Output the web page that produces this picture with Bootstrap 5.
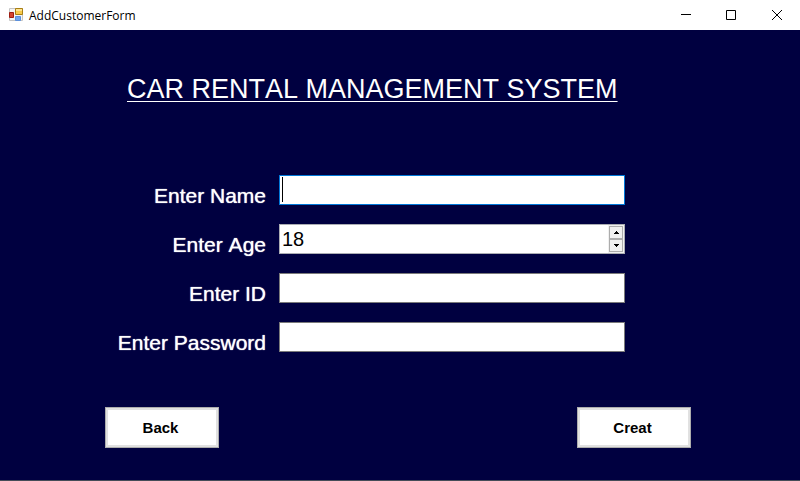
<!DOCTYPE html>
<html lang="en">
<head>
<meta charset="utf-8">
<meta name="viewport" content="width=device-width, initial-scale=1">
<title>AddCustomerForm</title>
<link href="https://cdn.jsdelivr.net/npm/bootstrap@5.3.0/dist/css/bootstrap.min.css" rel="stylesheet">
<style>
body { background: #000040; font-family: "Liberation Sans", Arial, sans-serif; font-kerning: none; color: #fff; }
.window { border-bottom: 1px solid #454c58; }
.titlebar { height: 30px; background: #fff; color: #000; font: 12px "Open Sans", "Noto Sans", sans-serif; }
.caption-btn { width: 45px; height: 30px; background: none; }
.caption-btn:last-child { width: 46px; }
.client { padding: 42px 109px 32px 105px; }
.heading { font-size: 27px; line-height: 34px; padding-left: 22px; text-decoration: underline 1px; text-underline-offset: 3px; }
.fields { display: grid; grid-template-columns: 161px 1fr; column-gap: 13px; row-gap: 19px; padding-right: 66px; margin-top: 69px; }
.fields label { font-size: 21px; line-height: 24px; height: 30px; padding-top: 9px; text-align: right; white-space: nowrap; text-shadow: 0 0 1px #fff; }
.field { height: 30px; background: #fff; border: 1px solid #7a7a7a; }
.field.current { border-color: #0078d7; }
.field.spin { border-color: #abadb3; }
.field input { width: 100%; height: 28px; padding: 0 2px; border: 0; outline: 0; background: transparent; color: #000; font-size: 20px; line-height: 28px; appearance: textfield; -moz-appearance: textfield; }
.field input::-webkit-inner-spin-button { appearance: none; -webkit-appearance: none; margin: 0; }
.caret { position: absolute; left: 2px; top: 1px; width: 1px; height: 25px; background: #000; }
.steps { width: 16px; padding: 1px; background: #f0f0f0; flex: none; }
.steps button { height: 13px; background: #f0f0f0; border: 1px solid #acacac; }
.actions { margin-top: 55px; }
.action { width: 114px; height: 41px; background: #fff; border: 1px solid #adadad; box-shadow: inset 0 0 0 2px #e1e1e1; color: #000; font-size: 15px; font-weight: 700; padding: 1px 3px 0 0; }
</style>
<script src="https://cdn.jsdelivr.net/npm/bootstrap@5.3.0/dist/js/bootstrap.bundle.min.js"></script>
</head>
<body>
<div class="window">
  <header class="titlebar d-flex align-items-center">
    <svg class="ms-2 me-1" width="17" height="16" viewBox="0 0 17 16" aria-hidden="true">
      <path d="M1.500 1.500h13v12h-13z" fill="#f4f4f4" stroke="#c4c4c4"/>
      <path d="M7.500 1.500h7v6h-7z" fill="#f7c948" stroke="#a87f14"/>
      <path d="M8 2h6v2H8z" fill="#ffe391"/>
      <path d="M1.500 5.500h4v5h-4z" fill="#d3442f" stroke="#9d1c12"/>
      <path d="M7.500 9.500h5v4h-5z" fill="#6fa5ee" stroke="#5b90dc"/>
    </svg>
    <span class="me-auto">AddCustomerForm</span>
    <button type="button" class="caption-btn border-0 p-0 d-flex align-items-center justify-content-center" aria-label="Minimize"><svg width="11" height="11"><path d="M0 4.500h10" stroke="#000"/></svg></button>
    <button type="button" class="caption-btn border-0 p-0 d-flex align-items-center justify-content-center" aria-label="Maximize"><svg width="11" height="11"><path d="M.5.500h9v9h-9z" fill="none" stroke="#000"/></svg></button>
    <button type="button" class="caption-btn border-0 p-0 d-flex align-items-center justify-content-center" aria-label="Close"><svg width="11" height="11"><path d="M0 0l10 10M10 0L0 10" stroke="#000"/></svg></button>
  </header>
  <main class="client">
    <h1 class="heading fw-normal text-nowrap mb-0">CAR RENTAL MANAGEMENT SYSTEM</h1>
    <form>
      <div class="fields">
        <label for="name">Enter Name</label>
        <div class="field current position-relative"><input id="name" type="text"><span class="caret"></span></div>
        <label for="age">Enter Age</label>
        <div class="field spin d-flex"><input id="age" type="number" value="18" min="18">
          <div class="steps d-flex flex-column">
            <button type="button" class="p-0 d-flex align-items-center justify-content-center" aria-label="Increase age"><svg width="5" height="3"><path d="M2 0h1v1h1v1h1v1H0V2h1V1h1z"/></svg></button>
            <button type="button" class="p-0 d-flex align-items-center justify-content-center" aria-label="Decrease age"><svg width="5" height="3"><path d="M0 0h5v1H4v1H3v1H2V2H1V1H0z"/></svg></button>
          </div>
        </div>
        <label for="customer-id">Enter ID</label>
        <div class="field"><input id="customer-id" type="text"></div>
        <label for="password">Enter Password</label>
        <div class="field"><input id="password" type="password"></div>
      </div>
      <div class="actions d-flex justify-content-between">
        <button type="button" class="action">Back</button>
        <button type="submit" class="action">Creat</button>
      </div>
    </form>
  </main>
</div>
</body>
</html>
